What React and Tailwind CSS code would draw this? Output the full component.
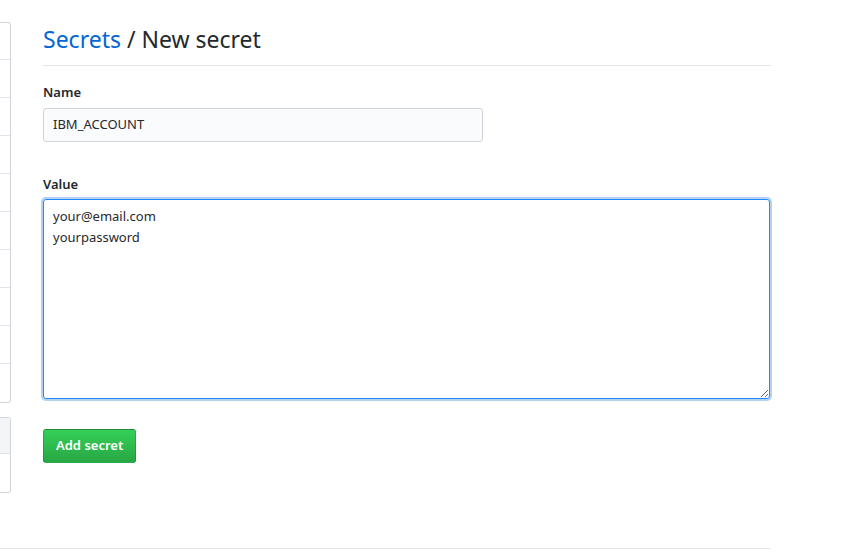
import React from "react";

export default function App() {
  const font = { fontFamily: '"Noto Sans", "Liberation Sans", sans-serif' };
  return (
    <div className="bg-white w-[868px] h-[555px] overflow-hidden text-[#24292e]" style={font}>
      <div className="flex w-[771px] h-[548px]">
        <div className="w-[11px] pt-[22px] shrink-0">
          <div className="border border-l-0 border-[#d1d5da] rounded-r-[3px] flex flex-col divide-y divide-[#e1e4e8]">
            {Array.from({ length: 10 }).map((_, i) => (
              <div key={i} className={i === 0 ? "h-[37px]" : "h-[38px]"} />
            ))}
          </div>
          <div className="mt-[14px] border border-l-0 border-[#d1d5da] rounded-r-[3px] flex flex-col divide-y divide-[#e1e4e8]">
            <div className="h-[36px] bg-[#f3f5f8]" />
            <div className="h-[38px]" />
          </div>
        </div>
        <div className="ml-[32px] flex-1 pt-[21px]">
          <div className="border-b border-[#e1e4e8] pb-[8px]">
            <h2 className="text-[23px] leading-[36px] font-normal">
              <span className="text-[#0366d6]">Secrets</span> / New secret
            </h2>
          </div>
          <div className="mt-[16px]">
            <label className="block text-[13px] leading-[21px] font-semibold mb-[5px]">Name</label>
            <div className="w-[440px] h-[34px] bg-[#fafbfc] border border-[#d1d5da] rounded-[3px] px-[9px] flex items-center text-[13px]">
              IBM_ACCOUNT
            </div>
          </div>
          <div className="mt-[32px]">
            <label className="block text-[13px] leading-[21px] font-semibold mb-[4px]">Value</label>
            <textarea
              readOnly
              defaultValue={"your@email.com\nyourpassword"}
              className="block w-[727px] h-[200px] border border-[#2188ff] rounded-[3px] px-[9px] py-[6px] text-[13px] leading-[21px] outline-none shadow-[0_0_0_2px_rgba(3,102,214,0.3)] text-[#24292e]"
              style={font}
            />
          </div>
          <div className="mt-[30px]">
            <button
              className="h-[34px] px-[12px] rounded-[3px] border border-[rgba(27,31,35,0.2)] text-white text-[13px] font-semibold bg-gradient-to-b from-[#34d058] to-[#28a745]"
              style={font}
            >
              Add secret
            </button>
          </div>
        </div>
      </div>
      <div className="w-[770px] border-t border-[#e1e4e8]" />
    </div>
  );
}
